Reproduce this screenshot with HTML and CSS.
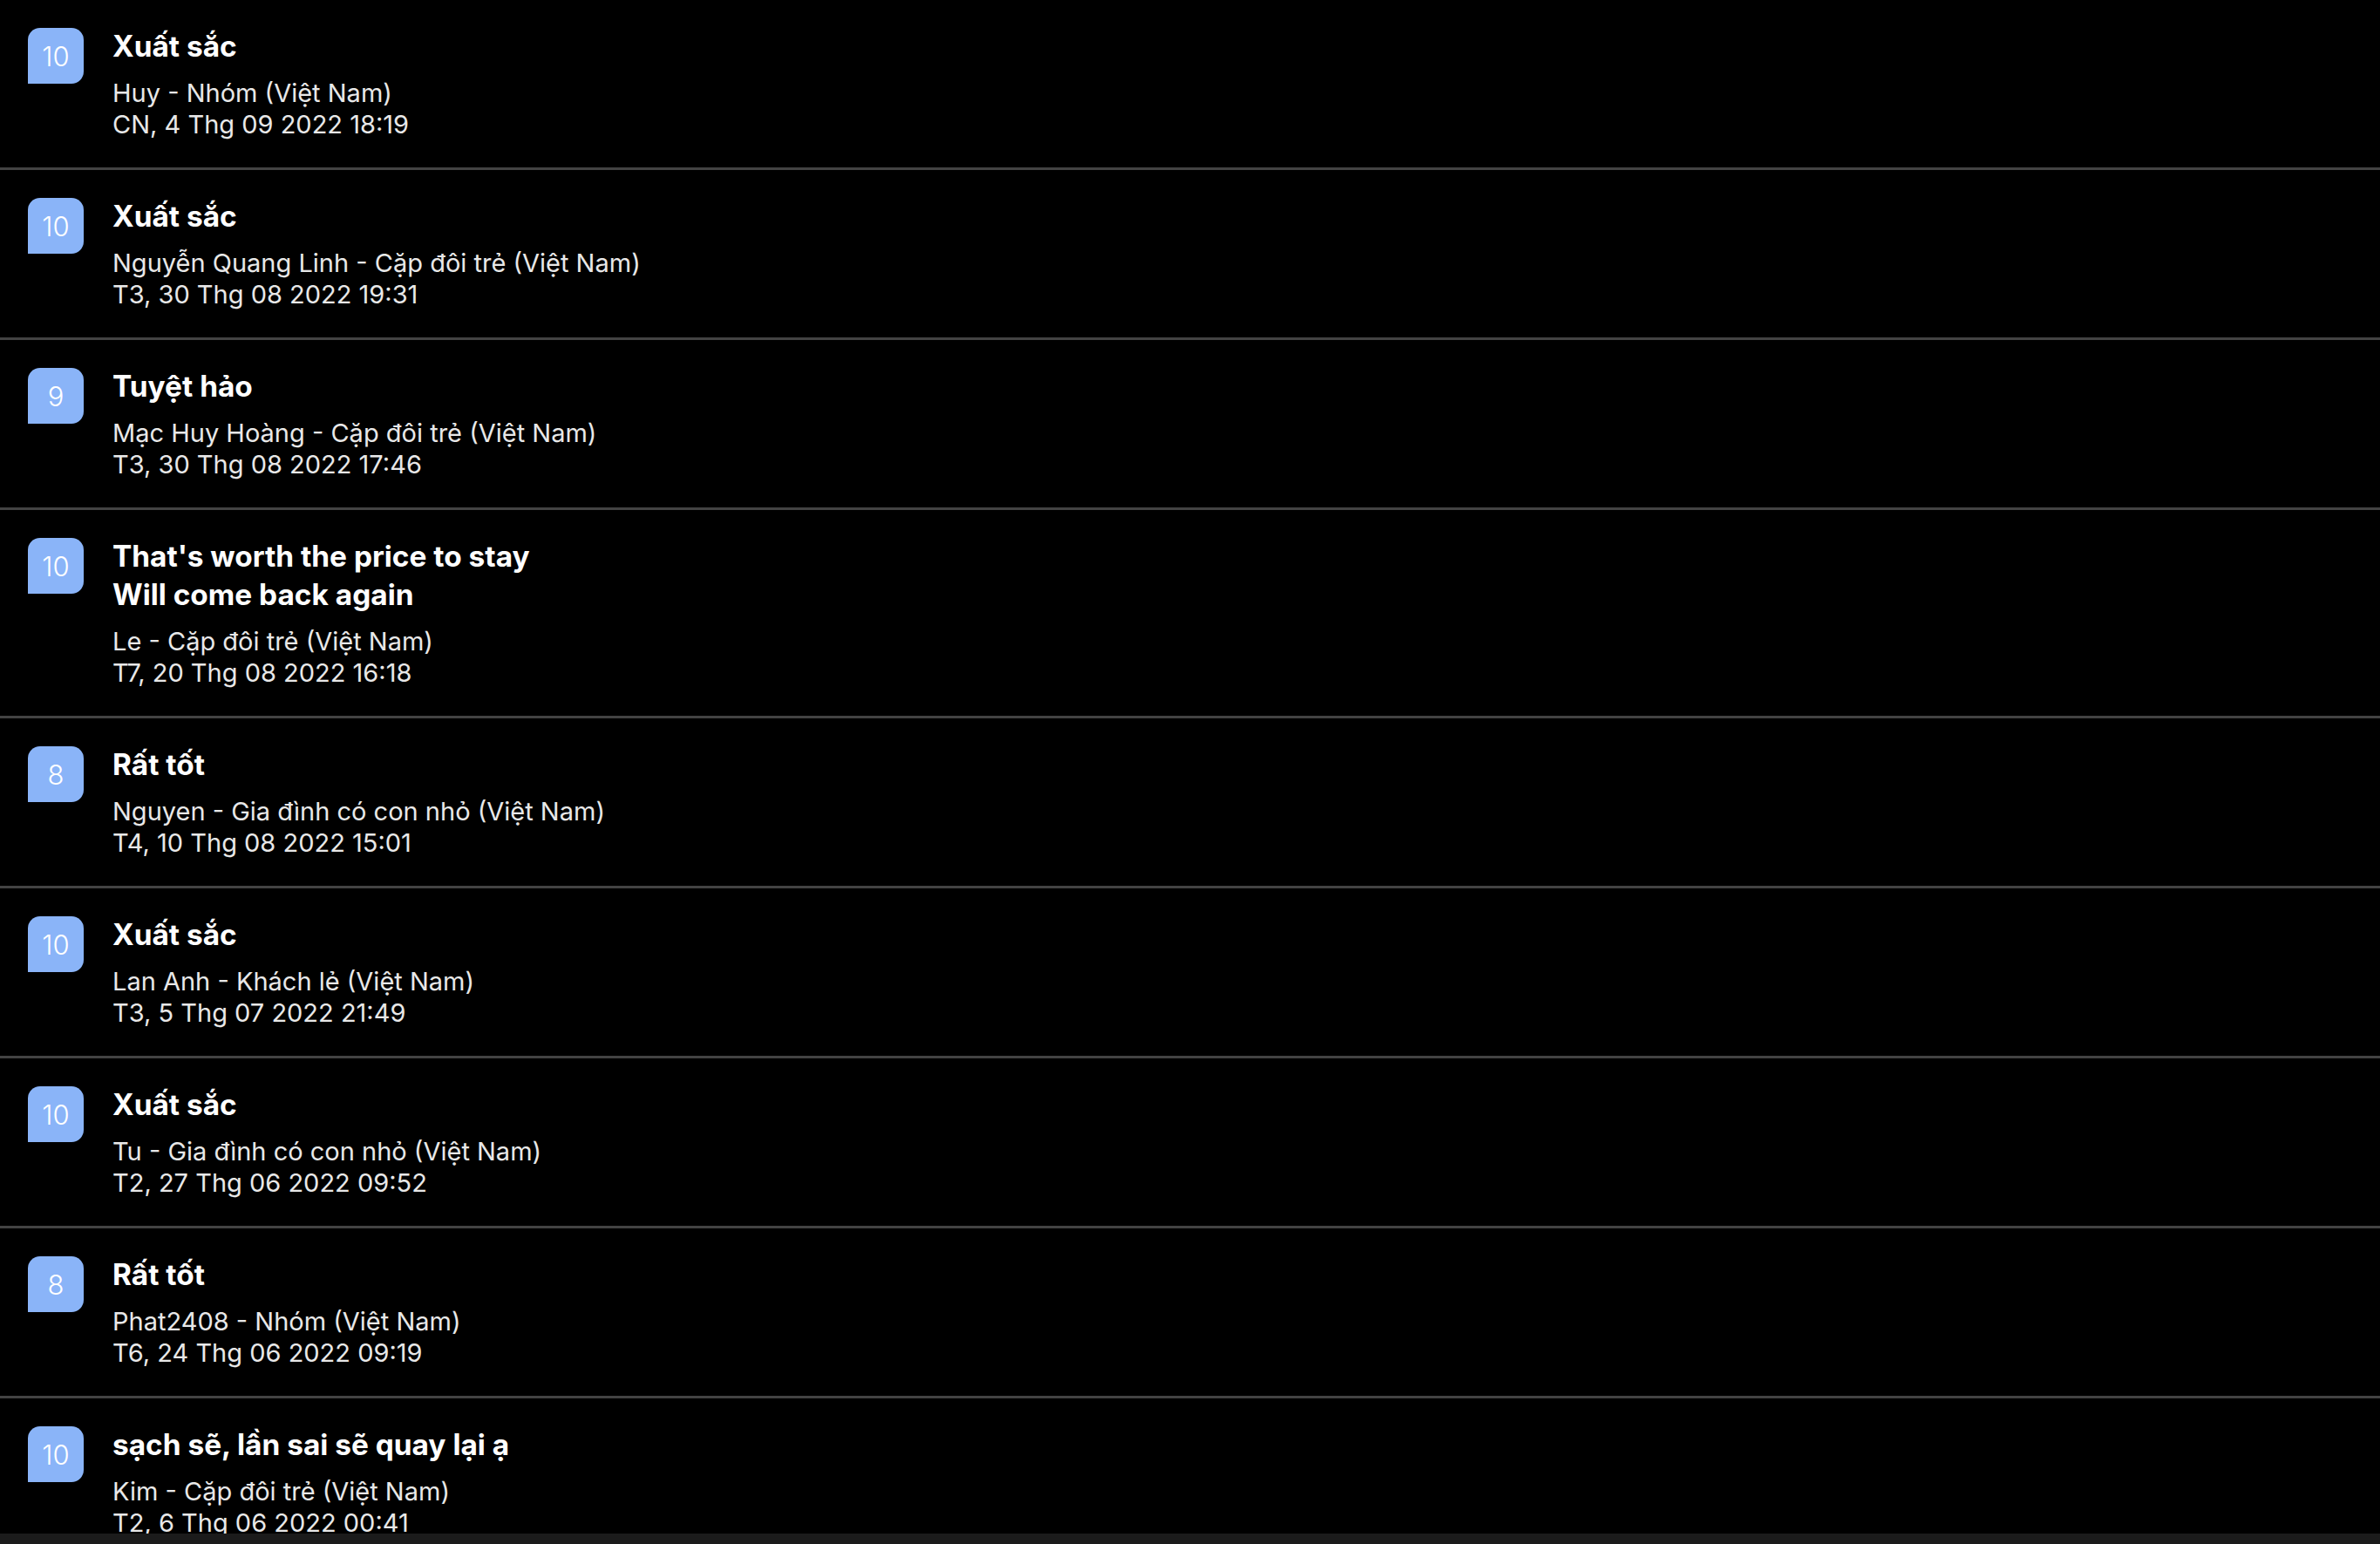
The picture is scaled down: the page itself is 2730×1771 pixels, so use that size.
FILE: index.html
```html
<!DOCTYPE html>
<html lang="vi">
<head>
<meta charset="utf-8">
<title>Đánh giá</title>
<link rel="stylesheet" href="styles.css">
</head>
<body>
<div class="page">
  <ul class="reviews">
    <li class="review">
      <div class="score">10</div>
      <div class="body">
        <div class="title">Xuất sắc</div>
        <div class="meta">Huy - Nhóm (Việt Nam)</div>
        <div class="meta">CN, 4 Thg 09 2022 18:19</div>
      </div>
    </li>
    <li class="review">
      <div class="score">10</div>
      <div class="body">
        <div class="title">Xuất sắc</div>
        <div class="meta">Nguyễn Quang Linh - Cặp đôi trẻ (Việt Nam)</div>
        <div class="meta">T3, 30 Thg 08 2022 19:31</div>
      </div>
    </li>
    <li class="review">
      <div class="score">9</div>
      <div class="body">
        <div class="title">Tuyệt hảo</div>
        <div class="meta">Mạc Huy Hoàng - Cặp đôi trẻ (Việt Nam)</div>
        <div class="meta">T3, 30 Thg 08 2022 17:46</div>
      </div>
    </li>
    <li class="review">
      <div class="score">10</div>
      <div class="body">
        <div class="title">That's worth the price to stay<br>Will come back again</div>
        <div class="meta">Le - Cặp đôi trẻ (Việt Nam)</div>
        <div class="meta">T7, 20 Thg 08 2022 16:18</div>
      </div>
    </li>
    <li class="review">
      <div class="score">8</div>
      <div class="body">
        <div class="title">Rất tốt</div>
        <div class="meta">Nguyen - Gia đình có con nhỏ (Việt Nam)</div>
        <div class="meta">T4, 10 Thg 08 2022 15:01</div>
      </div>
    </li>
    <li class="review">
      <div class="score">10</div>
      <div class="body">
        <div class="title">Xuất sắc</div>
        <div class="meta">Lan Anh - Khách lẻ (Việt Nam)</div>
        <div class="meta">T3, 5 Thg 07 2022 21:49</div>
      </div>
    </li>
    <li class="review">
      <div class="score">10</div>
      <div class="body">
        <div class="title">Xuất sắc</div>
        <div class="meta">Tu - Gia đình có con nhỏ (Việt Nam)</div>
        <div class="meta">T2, 27 Thg 06 2022 09:52</div>
      </div>
    </li>
    <li class="review">
      <div class="score">8</div>
      <div class="body">
        <div class="title">Rất tốt</div>
        <div class="meta">Phat2408 - Nhóm (Việt Nam)</div>
        <div class="meta">T6, 24 Thg 06 2022 09:19</div>
      </div>
    </li>
    <li class="review">
      <div class="score">10</div>
      <div class="body">
        <div class="title">sạch sẽ, lần sai sẽ quay lại ạ</div>
        <div class="meta">Kim - Cặp đôi trẻ (Việt Nam)</div>
        <div class="meta">T2, 6 Thg 06 2022 00:41</div>
      </div>
    </li>
  </ul>
  <div class="bottombar"></div>
</div>
</body>
</html>
```

FILE: styles.css
```css
html, body {
  margin: 0;
  padding: 0;
  background: #000;
}
.page {
  height: 1771px;
  overflow: hidden;
  display: flex;
  flex-direction: column;
  font-family: Inter, "Noto Sans", sans-serif;
  color: #fff;
}
.reviews {
  list-style: none;
  margin: 0;
  padding: 0;
  flex: 1;
  overflow: hidden;
}
.review {
  display: flex;
  align-items: flex-start;
  gap: 33px;
  padding: 31px 0 31px 32px;
  border-bottom: 3px solid #434343;
}
.score {
  flex: none;
  width: 64px;
  height: 64px;
  margin-top: 1px;
  background: #8ab4f8;
  border-radius: 14px 14px 14px 0;
  display: flex;
  align-items: center;
  justify-content: center;
  font-size: 31px;
  font-weight: 300;
  color: #fff;
}
.body {
  display: flex;
  flex-direction: column;
}
.title {
  font-size: 33.4px;
  font-weight: 700;
  line-height: 44px;
  margin-bottom: 14px;
  color: #fff;
}
.meta {
  font-size: 29px;
  line-height: 36px;
  color: #e8e8e8;
}
.bottombar {
  flex: none;
  height: 12px;
  background: #1b1b1b;
}
```
